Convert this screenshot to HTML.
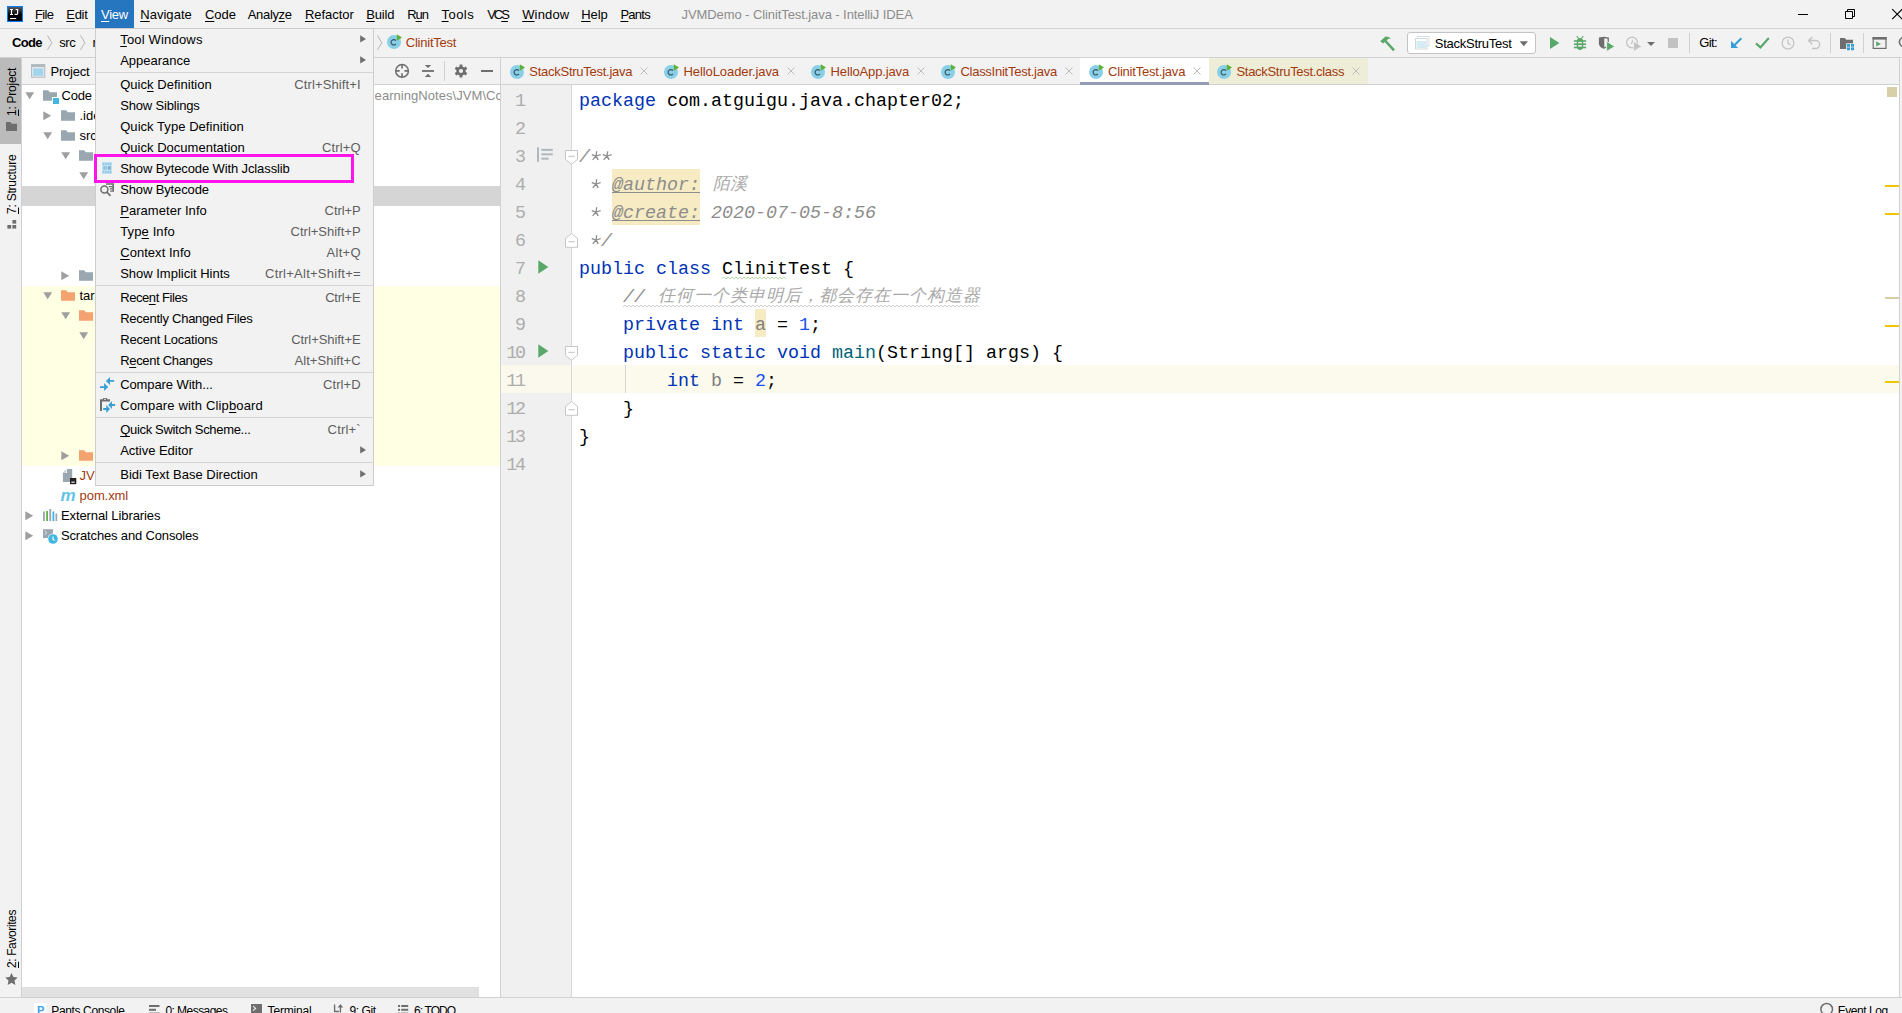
<!DOCTYPE html>
<html><head><meta charset="utf-8"><title>JVMDemo - ClinitTest.java - IntelliJ IDEA</title>
<style>
html,body{margin:0;padding:0;}
body{width:1902px;height:1013px;overflow:hidden;position:relative;background:#f2f2f2;font-family:"Liberation Sans",sans-serif;font-size:13px;color:#000;}
u{text-decoration:underline;text-underline-offset:2px;text-decoration-thickness:1px;}
svg{display:block;overflow:visible;}
</style></head><body>
<div style="position:absolute;left:0px;top:0px;width:1902px;height:1013px;background:#f2f2f2;"></div><div style="position:absolute;left:0px;top:28px;width:1902px;height:1px;background:#d1d1d1;"></div><div style="position:absolute;left:0px;top:57px;width:1902px;height:1px;background:#d1d1d1;"></div><div style="position:absolute;left:0px;top:58px;width:22px;height:939px;background:#f2f2f2;"></div><div style="position:absolute;left:21px;top:58px;width:1px;height:939px;background:#d1d1d1;"></div><div style="position:absolute;left:22px;top:58px;width:478px;height:27px;background:#f2f2f2;"></div><div style="position:absolute;left:22px;top:84px;width:478px;height:1px;background:#d1d1d1;"></div><div style="position:absolute;left:22px;top:85px;width:478px;height:912px;background:#fff;"></div><div style="position:absolute;left:500px;top:58px;width:1px;height:939px;background:#d1d1d1;"></div><div style="position:absolute;left:501px;top:58px;width:1398px;height:26px;background:#f2f2f2;"></div><div style="position:absolute;left:501px;top:84px;width:1398px;height:1px;background:#d1d1d1;"></div><div style="position:absolute;left:501px;top:85px;width:70px;height:912px;background:#f0f0f0;"></div><div style="position:absolute;left:571px;top:85px;width:1px;height:912px;background:#d9d9d9;"></div><div style="position:absolute;left:572px;top:85px;width:1327px;height:912px;background:#fff;"></div><div style="position:absolute;left:1899px;top:58px;width:1px;height:939px;background:#d1d1d1;"></div><div style="position:absolute;left:1900px;top:58px;width:2px;height:939px;background:#f2f2f2;"></div><div style="position:absolute;left:0px;top:997px;width:1902px;height:1px;background:#d1d1d1;"></div><div style="position:absolute;left:0px;top:998px;width:1902px;height:15px;background:#f2f2f2;"></div><svg style="position:absolute;left:7px;top:6px;" width="16" height="16" viewBox="0 0 16 16"><defs><linearGradient id="ijg" x1="0" y1="0" x2="0" y2="1"><stop offset="0" stop-color="#5a5a5a"/><stop offset="0.550" stop-color="#000"/></linearGradient></defs><rect x="0" y="0" width="16" height="16" fill="#087cfa"/><rect x="1.100" y="1.100" width="13.800" height="13.800" fill="url(#ijg)"/><path d="M3 3h3v1h-0.900v4h0.900v1h-3v-1h0.900v-4h-0.900z" fill="#fff"/><path d="M8.600 3h2.600v4.300c0 1.200-0.700 1.800-1.900 1.800c-0.900 0-1.600-0.300-2.100-0.900l0.800-0.800c0.300 0.400 0.700 0.600 1.200 0.600c0.500 0 0.800-0.300 0.800-0.900v-3.100h-1.400z" fill="#fff"/><rect x="3" y="12" width="6.200" height="1.100" fill="#fff"/></svg><div style="position:absolute;left:95px;top:0px;width:39px;height:28px;background:#2675bf;"></div><span style="position:absolute;left:35px;top:5px;font-family:'Liberation Sans', sans-serif;font-size:13px;line-height:19px;color:#000;white-space:pre;letter-spacing:-0.656px;"><u>F</u>ile</span><span style="position:absolute;left:66.3px;top:5px;font-family:'Liberation Sans', sans-serif;font-size:13px;line-height:19px;color:#000;white-space:pre;letter-spacing:-0.302px;"><u>E</u>dit</span><span style="position:absolute;left:101px;top:5px;font-family:'Liberation Sans', sans-serif;font-size:13px;line-height:19px;color:#fff;white-space:pre;letter-spacing:-0.251px;"><u>V</u>iew</span><span style="position:absolute;left:140.2px;top:5px;font-family:'Liberation Sans', sans-serif;font-size:13px;line-height:19px;color:#000;white-space:pre;letter-spacing:0.041px;"><u>N</u>avigate</span><span style="position:absolute;left:205px;top:5px;font-family:'Liberation Sans', sans-serif;font-size:13px;line-height:19px;color:#000;white-space:pre;letter-spacing:-0.031px;"><u>C</u>ode</span><span style="position:absolute;left:247.8px;top:5px;font-family:'Liberation Sans', sans-serif;font-size:13px;line-height:19px;color:#000;white-space:pre;letter-spacing:-0.344px;">Analy<u>z</u>e</span><span style="position:absolute;left:305px;top:5px;font-family:'Liberation Sans', sans-serif;font-size:13px;line-height:19px;color:#000;white-space:pre;letter-spacing:-0.049px;"><u>R</u>efactor</span><span style="position:absolute;left:366.2px;top:5px;font-family:'Liberation Sans', sans-serif;font-size:13px;line-height:19px;color:#000;white-space:pre;letter-spacing:-0.155px;"><u>B</u>uild</span><span style="position:absolute;left:407.3px;top:5px;font-family:'Liberation Sans', sans-serif;font-size:13px;line-height:19px;color:#000;white-space:pre;letter-spacing:-1.080px;">R<u>u</u>n</span><span style="position:absolute;left:441.6px;top:5px;font-family:'Liberation Sans', sans-serif;font-size:13px;line-height:19px;color:#000;white-space:pre;letter-spacing:0.435px;"><u>T</u>ools</span><span style="position:absolute;left:487.2px;top:5px;font-family:'Liberation Sans', sans-serif;font-size:13px;line-height:19px;color:#000;white-space:pre;letter-spacing:-2.017px;">VC<u>S</u></span><span style="position:absolute;left:522.2px;top:5px;font-family:'Liberation Sans', sans-serif;font-size:13px;line-height:19px;color:#000;white-space:pre;letter-spacing:0.150px;"><u>W</u>indow</span><span style="position:absolute;left:581.2px;top:5px;font-family:'Liberation Sans', sans-serif;font-size:13px;line-height:19px;color:#000;white-space:pre;letter-spacing:-0.050px;"><u>H</u>elp</span><span style="position:absolute;left:620.4px;top:5px;font-family:'Liberation Sans', sans-serif;font-size:13px;line-height:19px;color:#000;white-space:pre;letter-spacing:-0.737px;"><u>P</u>ants</span><span style="position:absolute;left:681.5px;top:5px;font-family:'Liberation Sans', sans-serif;font-size:13px;line-height:19px;color:#8c8c8c;white-space:pre;letter-spacing:-0.085px;">JVMDemo - ClinitTest.java - IntelliJ IDEA</span><div style="position:absolute;left:1798px;top:14px;width:10px;height:1px;background:#000;"></div><svg style="position:absolute;left:1845px;top:9px;" width="10" height="10" viewBox="0 0 10 10"><path d="M0.500 2.500h7v7h-7z M2.500 2.500v-2h7v7h-2" fill="none" stroke="#000" stroke-width="1"/></svg><svg style="position:absolute;left:1892px;top:9px;" width="10" height="10" viewBox="0 0 10 10"><path d="M0.200 0.200l10 10M10.200 0.200l-10 10" fill="none" stroke="#000" stroke-width="1.100"/></svg><span style="position:absolute;left:12px;top:33px;font-family:'Liberation Sans', sans-serif;font-size:13px;line-height:19px;color:#000;white-space:pre;font-weight:bold;letter-spacing:-0.700px;">Code</span><svg style="position:absolute;left:47px;top:35px;" width="6" height="16" viewBox="0 0 6 16"><path d="M0.500 0.500l4.300 7.200l-4.300 7.200" fill="none" stroke="#b4b4b4" stroke-width="1"/></svg><span style="position:absolute;left:59.3px;top:33px;font-family:'Liberation Sans', sans-serif;font-size:13px;line-height:19px;color:#000;white-space:pre;letter-spacing:-0.472px;">src</span><svg style="position:absolute;left:80px;top:35px;" width="6" height="16" viewBox="0 0 6 16"><path d="M0.500 0.500l4.300 7.200l-4.300 7.200" fill="none" stroke="#b4b4b4" stroke-width="1"/></svg><span style="position:absolute;left:92.4px;top:33px;font-family:'Liberation Sans', sans-serif;font-size:13px;line-height:19px;color:#000;white-space:pre;">r</span><svg style="position:absolute;left:377px;top:35px;" width="6" height="16" viewBox="0 0 6 16"><path d="M0.500 0.500l4.300 7.200l-4.300 7.200" fill="none" stroke="#b4b4b4" stroke-width="1"/></svg><svg style="position:absolute;left:386px;top:34.4px;" width="16" height="16" viewBox="0 0 16 16"><circle cx="8" cy="8" r="7" fill="#88cfe8"/><path d="M9.9 6.6a2.7 2.7 0 1 0 0 3.4" fill="none" stroke="#3c5866" stroke-width="1.2"/><path d="M10.8 0.2v6.6l5.2-3.3z" fill="#5db233"/></svg><span style="position:absolute;left:405.8px;top:33px;font-family:'Liberation Sans', sans-serif;font-size:13px;line-height:19px;color:#a23a0e;white-space:pre;letter-spacing:-0.239px;">ClinitTest</span><svg style="position:absolute;left:1379px;top:35px;" width="18" height="16" viewBox="0 0 18 16"><path d="M1.2 6.2l5.2-4.6l3.6 0.4l1.8 2l-2.2 -0.4l-2 1.8l8.4 9.2l-1.9 1.7l-8.4-9.2l-1.6 1.4z" fill="#59a869"/></svg><div style="position:absolute;left:1407px;top:32px;width:127px;height:20px;background:#fff;border:1px solid #c4c4c4;border-radius:3px;"></div><svg style="position:absolute;left:1415px;top:36px;" width="15" height="14" viewBox="0 0 15 14"><rect x="2.5" y="0.5" width="11.5" height="9.5" fill="#fff" stroke="#d9dde0" stroke-width="1"/><rect x="0.5" y="2.5" width="11.5" height="10.5" fill="#fff" stroke="#d3d8db" stroke-width="1"/><rect x="1.5" y="5" width="9.5" height="7" fill="#d5ebf5"/></svg><span style="position:absolute;left:1434.8px;top:34px;font-family:'Liberation Sans', sans-serif;font-size:13px;line-height:19px;color:#000;white-space:pre;letter-spacing:-0.267px;">StackStruTest</span><svg style="position:absolute;left:1519px;top:41px;" width="10" height="6" viewBox="0 0 10 6"><path d="M0.6 0.3h8.4l-4.2 4.9z" fill="#6e6e6e"/></svg><svg style="position:absolute;left:1549px;top:36px;" width="12" height="14" viewBox="0 0 12 14"><path d="M1 1l9.4 6l-9.4 6z" fill="#59a869"/></svg><svg style="position:absolute;left:1565px;top:30px;" width="100" height="26" viewBox="0 0 100 26"><g fill="#59a869"><path d="M11.8 11.2c0-1.8 1.4-3.1 3.2-3.1s3.2 1.3 3.2 3.1v5.4c0 2-1.4 3.5-3.2 3.5s-3.2-1.5-3.2-3.5z"/><rect x="8.9" y="10.2" width="12.2" height="1.6"/><rect x="8.9" y="13.4" width="12.2" height="1.6"/><rect x="8.9" y="16.7" width="12.2" height="1.6"/><path d="M12.2 5.8l2 2.6l-0.9 0.7l-2-2.6zM17.8 5.8l-2 2.6l0.9 0.7l2-2.6z"/></g><g fill="#f2f2f2"><rect x="13.1" y="11.9" width="3.8" height="1.4"/><rect x="13.1" y="15.1" width="3.8" height="1.5"/></g><path d="M33.9 7.6l5-0.8l5 0.8v5.8c0 2.6-2 4.4-5 5.4c-3-1-5-2.800-5-5.400z" fill="#6e6e6e"/><path d="M39.300 8.300l3.300 0.500v4.800c0 1.700-1.200 3-3.300 3.900z" fill="#f2f2f2"/><path d="M41.600 11.300l8.200 5.100l-8.200 5.100z" fill="#59a869" stroke="#f2f2f2" stroke-width="0.9"/><circle cx="67" cy="12.500" r="5.400" fill="none" stroke="#c3c3c3" stroke-width="1.300"/><path d="M67.300 9.600v2.600l-1.300 1.700" fill="none" stroke="#c3c3c3" stroke-width="1.100"/><path d="M68.600 11.300l8.200 5.100l-8.200 5.100z" fill="#c3c3c3" stroke="#f2f2f2" stroke-width="0.9"/><path d="M82 12h8l-4 4z" fill="#6e6e6e"/></svg><div style="position:absolute;left:1668px;top:38px;width:10px;height:10px;background:#c2c2c2;"></div><div style="position:absolute;left:1689px;top:33px;width:1px;height:20px;background:#d1d1d1;"></div><span style="position:absolute;left:1699.3px;top:33px;font-family:'Liberation Sans', sans-serif;font-size:13px;line-height:19px;color:#000;white-space:pre;letter-spacing:-0.611px;">Git:</span><svg style="position:absolute;left:1730px;top:37px;" width="13" height="12" viewBox="0 0 13 12"><path d="M11.4 1.200l-7.600 7.600" fill="none" stroke="#389fd6" stroke-width="2"/><path d="M1 3.800v7.200h7.200z" fill="#389fd6"/></svg><svg style="position:absolute;left:1755px;top:37px;" width="15" height="12" viewBox="0 0 15 12"><path d="M1 6.4l4.4 4l8.4-9.4" fill="none" stroke="#59a869" stroke-width="2.1"/></svg><svg style="position:absolute;left:1781px;top:36px;" width="14" height="14" viewBox="0 0 14 14"><circle cx="7" cy="7" r="5.9" fill="none" stroke="#c4c4c4" stroke-width="1.3"/><path d="M7 3.4v4l2.6 1.6" fill="none" stroke="#c4c4c4" stroke-width="1.3"/></svg><svg style="position:absolute;left:1807px;top:36px;" width="15" height="14" viewBox="0 0 15 14"><path d="M5.2 1l-3.6 3.6l3.6 3.6M1.8 4.6h6.8a4 4 0 0 1 0 8h-3.6" fill="none" stroke="#c4c4c4" stroke-width="1.5"/></svg><div style="position:absolute;left:1830px;top:33px;width:1px;height:20px;background:#d1d1d1;"></div><svg style="position:absolute;left:1839px;top:37px;" width="16" height="14" viewBox="0 0 16 14"><path d="M1 1h4.800l1.500 1.800h6.700v3.400h-6.800v5.800h-6.200z" fill="#6e6e6e"/><g fill="#389fd6"><rect x="8" y="7" width="3" height="2.800"/><rect x="12" y="7" width="3" height="2.800"/><rect x="8" y="10.400" width="3" height="2.800"/><rect x="12" y="10.400" width="3" height="2.800"/></g></svg><div style="position:absolute;left:1863px;top:33px;width:1px;height:20px;background:#d1d1d1;"></div><svg style="position:absolute;left:1872px;top:37px;" width="16" height="13" viewBox="0 0 16 13"><rect x="1.200" y="0.600" width="12.800" height="10.800" fill="none" stroke="#6e6e6e" stroke-width="1.200"/><rect x="0.600" y="0" width="14" height="2.600" fill="#6e6e6e"/><path d="M4.200 4.200l4.800 2.700l-4.800 2.700z" fill="#59a869"/></svg><svg style="position:absolute;left:1898px;top:36px;" width="8" height="14" viewBox="0 0 8 14"><circle cx="6" cy="6" r="4.6" fill="none" stroke="#6e6e6e" stroke-width="1.6"/></svg><div style="position:absolute;left:0px;top:58px;width:21px;height:86px;background:#bbbbbb;"></div><span style="position:absolute;left:16px;top:103px;font-family:'Liberation Sans', sans-serif;font-size:12px;line-height:18px;color:#000;white-space:pre;letter-spacing:-0.256px;transform-origin:0 13px;transform:rotate(-90deg);"><u>1</u>: Project</span><svg style="position:absolute;left:6px;top:122px;" width="11" height="9" viewBox="0 0 11 9"><path d="M0 0h4.4l1.4 1.7h5.2v7.3h-11z" fill="#6e6e6e"/></svg><span style="position:absolute;left:16px;top:201px;font-family:'Liberation Sans', sans-serif;font-size:12px;line-height:18px;color:#000;white-space:pre;letter-spacing:-0.222px;transform-origin:0 13px;transform:rotate(-90deg);"><u>7</u>: Structure</span><svg style="position:absolute;left:7px;top:220px;" width="10" height="9" viewBox="0 0 10 9"><g fill="#6e6e6e"><rect x="5.4" y="0" width="3.8" height="3.6"/><rect x="0.4" y="5" width="3.8" height="3.6"/><rect x="5.4" y="5" width="3.8" height="3.6"/></g></svg><span style="position:absolute;left:16px;top:955px;font-family:'Liberation Sans', sans-serif;font-size:12px;line-height:18px;color:#000;white-space:pre;letter-spacing:-0.391px;transform-origin:0 13px;transform:rotate(-90deg);"><u>2</u>: Favorites</span><svg style="position:absolute;left:5px;top:973px;" width="13" height="12" viewBox="0 0 13 12"><path d="M6.5 0l1.9 4.1l4.3 0.5l-3.2 3l0.9 4.4l-3.9-2.3l-3.9 2.3l0.9-4.4l-3.2-3l4.3-0.5z" fill="#6e6e6e"/></svg><svg style="position:absolute;left:31px;top:64px;" width="15" height="14" viewBox="0 0 15 14"><rect x="0.6" y="0.6" width="13.2" height="12.6" fill="#e8e8e8" stroke="#aeb9c0" stroke-width="1"/><rect x="0.6" y="0.6" width="13.2" height="2.4" fill="#aeb9c0"/><rect x="2.2" y="4.4" width="10" height="7.4" fill="#9fd6ee"/></svg><span style="position:absolute;left:50.6px;top:62px;font-family:'Liberation Sans', sans-serif;font-size:13px;line-height:19px;color:#000;white-space:pre;letter-spacing:-0.245px;">Project</span><svg style="position:absolute;left:394px;top:63px;" width="16" height="16" viewBox="0 0 16 16"><circle cx="8.05" cy="7.9" r="6.35" fill="none" stroke="#6e6e6e" stroke-width="1.500"/><path d="M8.05 1.500v4M8.05 10.300v4M1.650 7.900h4M10.450 7.900h4" stroke="#6e6e6e" stroke-width="1.600"/></svg><svg style="position:absolute;left:421px;top:64px;" width="14" height="14" viewBox="0 0 14 14"><rect x="1" y="6.100" width="12" height="1.800" fill="#6e6e6e"/><path d="M3.800 1.100h6.400l-3.200 3zM3.800 12.900h6.400l-3.200-3.100z" fill="#6e6e6e"/></svg><div style="position:absolute;left:444px;top:61px;width:1px;height:20px;background:#d1d1d1;"></div><svg style="position:absolute;left:454px;top:64px;" width="14" height="14" viewBox="0 0 14 14"><path d="M5.49 2.55L5.63 0.54L8.37 0.54L8.51 2.55L10.10 3.47L11.90 2.58L13.28 4.96L11.61 6.08L11.61 7.92L13.28 9.04L11.90 11.42L10.10 10.53L8.51 11.45L8.37 13.46L5.63 13.46L5.49 11.45L3.90 10.53L2.10 11.42L0.72 9.04L2.39 7.92L2.39 6.08L0.72 4.96L2.10 2.58L3.90 3.47z" fill="#6e6e6e"/><circle cx="7" cy="7" r="2.100" fill="#f2f2f2"/></svg><div style="position:absolute;left:481px;top:70px;width:12px;height:2px;background:#6e6e6e;"></div><div style="position:absolute;left:22px;top:286px;width:478px;height:180px;background:#ffffe4;"></div><div style="position:absolute;left:22px;top:186px;width:478px;height:20px;background:#d5d5d5;"></div><svg style="position:absolute;left:25px;top:92px;" width="10" height="8" viewBox="0 0 10 8"><path d="M0.3 0.3h8.8l-4.4 6.9z" fill="#9f9f9f"/></svg><svg style="position:absolute;left:43px;top:90px;" width="14" height="11" viewBox="0 0 14 11"><path d="M0 0.2h5.2l1.5 2h7.3v8.6h-14z" fill="#9aa7b0"/></svg><div style="position:absolute;left:52px;top:97px;width:6px;height:6px;background:#fff;"></div><div style="position:absolute;left:53px;top:98px;width:6px;height:6px;background:#40b6e0;"></div><span style="position:absolute;left:61.5px;top:86px;font-family:'Liberation Sans', sans-serif;font-size:13px;line-height:19px;color:#000;white-space:pre;letter-spacing:-0.226px;">Code</span><svg style="position:absolute;left:43px;top:111px;" width="8" height="10" viewBox="0 0 8 10"><path d="M0.300 0.200v9l7.900-4.500z" fill="#9f9f9f"/></svg><svg style="position:absolute;left:61px;top:110px;" width="14" height="11" viewBox="0 0 14 11"><path d="M0 0.2h5.2l1.5 2h7.3v8.6h-14z" fill="#9aa7b0"/></svg><span style="position:absolute;left:79.5px;top:106px;font-family:'Liberation Sans', sans-serif;font-size:13px;line-height:19px;color:#000;white-space:pre;">.ide</span><svg style="position:absolute;left:43px;top:132px;" width="10" height="8" viewBox="0 0 10 8"><path d="M0.3 0.3h8.8l-4.4 6.9z" fill="#9f9f9f"/></svg><svg style="position:absolute;left:61px;top:130px;" width="14" height="11" viewBox="0 0 14 11"><path d="M0 0.2h5.2l1.5 2h7.3v8.6h-14z" fill="#9aa7b0"/></svg><span style="position:absolute;left:79.5px;top:126px;font-family:'Liberation Sans', sans-serif;font-size:13px;line-height:19px;color:#000;white-space:pre;">src</span><svg style="position:absolute;left:61px;top:152px;" width="10" height="8" viewBox="0 0 10 8"><path d="M0.3 0.3h8.8l-4.4 6.9z" fill="#9f9f9f"/></svg><svg style="position:absolute;left:79px;top:150px;" width="14" height="11" viewBox="0 0 14 11"><path d="M0 0.2h5.2l1.5 2h7.3v8.6h-14z" fill="#9aa7b0"/></svg><svg style="position:absolute;left:79px;top:172px;" width="10" height="8" viewBox="0 0 10 8"><path d="M0.3 0.3h8.8l-4.4 6.9z" fill="#9f9f9f"/></svg><svg style="position:absolute;left:61px;top:271px;" width="8" height="10" viewBox="0 0 8 10"><path d="M0.300 0.200v9l7.900-4.500z" fill="#9f9f9f"/></svg><svg style="position:absolute;left:79px;top:270px;" width="14" height="11" viewBox="0 0 14 11"><path d="M0 0.2h5.2l1.5 2h7.3v8.6h-14z" fill="#9aa7b0"/></svg><svg style="position:absolute;left:43px;top:292px;" width="10" height="8" viewBox="0 0 10 8"><path d="M0.3 0.3h8.8l-4.4 6.9z" fill="#9f9f9f"/></svg><svg style="position:absolute;left:61px;top:290px;" width="14" height="11" viewBox="0 0 14 11"><path d="M0 0.2h5.2l1.5 2h7.3v8.6h-14z" fill="#f4a26f"/></svg><span style="position:absolute;left:79.5px;top:286px;font-family:'Liberation Sans', sans-serif;font-size:13px;line-height:19px;color:#000;white-space:pre;">tar</span><svg style="position:absolute;left:61px;top:312px;" width="10" height="8" viewBox="0 0 10 8"><path d="M0.3 0.3h8.8l-4.4 6.9z" fill="#9f9f9f"/></svg><svg style="position:absolute;left:79px;top:310px;" width="14" height="11" viewBox="0 0 14 11"><path d="M0 0.2h5.2l1.5 2h7.3v8.6h-14z" fill="#f4a26f"/></svg><svg style="position:absolute;left:79px;top:332px;" width="10" height="8" viewBox="0 0 10 8"><path d="M0.3 0.3h8.8l-4.4 6.9z" fill="#9f9f9f"/></svg><svg style="position:absolute;left:61px;top:451px;" width="8" height="10" viewBox="0 0 8 10"><path d="M0.300 0.200v9l7.900-4.500z" fill="#9f9f9f"/></svg><svg style="position:absolute;left:79px;top:450px;" width="14" height="11" viewBox="0 0 14 11"><path d="M0 0.2h5.2l1.5 2h7.3v8.6h-14z" fill="#f4a26f"/></svg><svg style="position:absolute;left:62px;top:468px;" width="16" height="16" viewBox="0 0 16 16"><path d="M5 1h5.200v13h-9.300v-8.900h4.100z" fill="#9aa7b0"/><path d="M4.200 1.200v3.600h-3.400z" fill="#c3cbd1"/><rect x="8" y="10" width="6.300" height="6.200" fill="#231f20"/><rect x="9.300" y="13.600" width="3.400" height="1.100" fill="#fff"/></svg><span style="position:absolute;left:79.4px;top:466px;font-family:'Liberation Sans', sans-serif;font-size:13px;line-height:19px;color:#a23a0e;white-space:pre;">JVM</span><span style="position:absolute;left:60.5px;top:484px;font-family:'Liberation Sans', sans-serif;font-size:17px;line-height:23px;color:#62c4ea;white-space:pre;font-weight:bold;font-style:italic;">m</span><span style="position:absolute;left:79.6px;top:486px;font-family:'Liberation Sans', sans-serif;font-size:13px;line-height:19px;color:#a23a0e;white-space:pre;letter-spacing:-0.087px;">pom.xml</span><svg style="position:absolute;left:25px;top:511px;" width="8" height="10" viewBox="0 0 8 10"><path d="M0.300 0.200v9l7.900-4.500z" fill="#9f9f9f"/></svg><svg style="position:absolute;left:42px;top:509px;" width="16" height="14" viewBox="0 0 16 14"><g><rect x="1" y="2.5" width="1.8" height="9.5" fill="#9aa7b0"/><rect x="4.2" y="2" width="1.8" height="10" fill="#62b543"/><rect x="7.3" y="0" width="1.9" height="12" fill="#9aa7b0"/><rect x="10.5" y="2.5" width="1.8" height="9.5" fill="#40b6e0"/><rect x="13.5" y="4.5" width="1.7" height="7.5" fill="#9aa7b0"/></g></svg><span style="position:absolute;left:61px;top:506px;font-family:'Liberation Sans', sans-serif;font-size:13px;line-height:19px;color:#000;white-space:pre;letter-spacing:-0.103px;">External Libraries</span><svg style="position:absolute;left:25px;top:531px;" width="8" height="10" viewBox="0 0 8 10"><path d="M0.300 0.200v9l7.900-4.500z" fill="#9f9f9f"/></svg><svg style="position:absolute;left:42px;top:528px;" width="17" height="17" viewBox="0 0 17 17"><path d="M1 1.200h10v8.800h-10z" fill="#9aa7b0"/><path d="M2.600 3l2.200 1.800l-2.200 1.800" fill="none" stroke="#dfe4e8" stroke-width="1"/><circle cx="11" cy="11" r="5.400" fill="#fff"/><circle cx="11" cy="11" r="4.800" fill="#40b6e0"/><path d="M11 8.400v2.900l1.700 1.300" fill="none" stroke="#fff" stroke-width="1.100"/></svg><span style="position:absolute;left:61px;top:526px;font-family:'Liberation Sans', sans-serif;font-size:13px;line-height:19px;color:#000;white-space:pre;letter-spacing:-0.158px;">Scratches and Consoles</span><span style="position:absolute;left:374.6px;top:86px;font-family:'Liberation Sans', sans-serif;font-size:13px;line-height:19px;color:#8c8c8c;white-space:pre;letter-spacing:0.056px;width:125px;overflow:hidden;">earningNotes\JVM\Cc</span><div style="position:absolute;left:22px;top:987px;width:457px;height:10px;background:#e1e1e1;"></div><div style="position:absolute;left:1080px;top:58px;width:129px;height:27px;background:#fff;"></div><div style="position:absolute;left:1080px;top:82px;width:129px;height:3px;background:#939eb5;"></div><div style="position:absolute;left:1209px;top:58px;width:159px;height:26px;background:#eeedd7;"></div><svg style="position:absolute;left:509.4px;top:64px;" width="16" height="16" viewBox="0 0 16 16"><circle cx="8" cy="8" r="7" fill="#88cfe8"/><path d="M9.9 6.6a2.7 2.7 0 1 0 0 3.4" fill="none" stroke="#3c5866" stroke-width="1.2"/><path d="M10.8 0.2v6.6l5.2-3.3z" fill="#5db233"/></svg><span style="position:absolute;left:529.3px;top:62px;font-family:'Liberation Sans', sans-serif;font-size:13px;line-height:19px;color:#a23a0e;white-space:pre;letter-spacing:-0.262px;">StackStruTest.java</span><svg style="position:absolute;left:640px;top:67.4px;" width="8" height="8" viewBox="0 0 8 8"><path d="M0.5 0.5l7 7M7.5 0.5l-7 7" fill="none" stroke="#bdbdbd" stroke-width="1"/></svg><svg style="position:absolute;left:663.2px;top:64px;" width="16" height="16" viewBox="0 0 16 16"><circle cx="8" cy="8" r="7" fill="#88cfe8"/><path d="M9.9 6.6a2.7 2.7 0 1 0 0 3.4" fill="none" stroke="#3c5866" stroke-width="1.2"/><path d="M10.8 0.2v6.6l5.2-3.3z" fill="#5db233"/></svg><span style="position:absolute;left:683.5px;top:62px;font-family:'Liberation Sans', sans-serif;font-size:13px;line-height:19px;color:#a23a0e;white-space:pre;letter-spacing:-0.084px;">HelloLoader.java</span><svg style="position:absolute;left:786.8px;top:67.4px;" width="8" height="8" viewBox="0 0 8 8"><path d="M0.5 0.5l7 7M7.5 0.5l-7 7" fill="none" stroke="#bdbdbd" stroke-width="1"/></svg><svg style="position:absolute;left:810.1px;top:64px;" width="16" height="16" viewBox="0 0 16 16"><circle cx="8" cy="8" r="7" fill="#88cfe8"/><path d="M9.9 6.6a2.7 2.7 0 1 0 0 3.4" fill="none" stroke="#3c5866" stroke-width="1.2"/><path d="M10.8 0.2v6.6l5.2-3.3z" fill="#5db233"/></svg><span style="position:absolute;left:830.6px;top:62px;font-family:'Liberation Sans', sans-serif;font-size:13px;line-height:19px;color:#a23a0e;white-space:pre;letter-spacing:-0.135px;">HelloApp.java</span><svg style="position:absolute;left:917.2px;top:67.4px;" width="8" height="8" viewBox="0 0 8 8"><path d="M0.5 0.5l7 7M7.5 0.5l-7 7" fill="none" stroke="#bdbdbd" stroke-width="1"/></svg><svg style="position:absolute;left:940.1px;top:64px;" width="16" height="16" viewBox="0 0 16 16"><circle cx="8" cy="8" r="7" fill="#88cfe8"/><path d="M9.9 6.6a2.7 2.7 0 1 0 0 3.4" fill="none" stroke="#3c5866" stroke-width="1.2"/><path d="M10.8 0.2v6.6l5.2-3.3z" fill="#5db233"/></svg><span style="position:absolute;left:960.4px;top:62px;font-family:'Liberation Sans', sans-serif;font-size:13px;line-height:19px;color:#a23a0e;white-space:pre;letter-spacing:-0.256px;">ClassInitTest.java</span><svg style="position:absolute;left:1065px;top:67.4px;" width="8" height="8" viewBox="0 0 8 8"><path d="M0.5 0.5l7 7M7.5 0.5l-7 7" fill="none" stroke="#bdbdbd" stroke-width="1"/></svg><svg style="position:absolute;left:1088px;top:64px;" width="16" height="16" viewBox="0 0 16 16"><circle cx="8" cy="8" r="7" fill="#88cfe8"/><path d="M9.9 6.6a2.7 2.7 0 1 0 0 3.4" fill="none" stroke="#3c5866" stroke-width="1.2"/><path d="M10.8 0.2v6.6l5.2-3.3z" fill="#5db233"/></svg><span style="position:absolute;left:1108px;top:62px;font-family:'Liberation Sans', sans-serif;font-size:13px;line-height:19px;color:#a23a0e;white-space:pre;letter-spacing:-0.200px;">ClinitTest.java</span><svg style="position:absolute;left:1193.4px;top:67.4px;" width="8" height="8" viewBox="0 0 8 8"><path d="M0.5 0.5l7 7M7.5 0.5l-7 7" fill="none" stroke="#bdbdbd" stroke-width="1"/></svg><svg style="position:absolute;left:1216.4px;top:64px;" width="16" height="16" viewBox="0 0 16 16"><circle cx="8" cy="8" r="7" fill="#88cfe8"/><path d="M9.9 6.6a2.7 2.7 0 1 0 0 3.4" fill="none" stroke="#3c5866" stroke-width="1.2"/><path d="M10.8 0.2v6.6l5.2-3.3z" fill="#5db233"/></svg><span style="position:absolute;left:1236.5px;top:62px;font-family:'Liberation Sans', sans-serif;font-size:13px;line-height:19px;color:#a23a0e;white-space:pre;letter-spacing:-0.302px;">StackStruTest.class</span><svg style="position:absolute;left:1352.3px;top:67.4px;" width="8" height="8" viewBox="0 0 8 8"><path d="M0.5 0.5l7 7M7.5 0.5l-7 7" fill="none" stroke="#bdbdbd" stroke-width="1"/></svg><div style="position:absolute;left:1887px;top:87px;width:10px;height:10px;background:#d8cfa9;"></div><div style="position:absolute;left:572px;top:365px;width:1327px;height:28px;background:#fcfaed;"></div><div style="position:absolute;left:501px;top:365px;width:70px;height:28px;background:#fbf9ee;"></div><span style="position:absolute;left:515px;top:90px;font-family:'Liberation Mono', monospace;font-size:18.33px;line-height:24px;color:#adadad;white-space:pre;">1</span><span style="position:absolute;left:515px;top:118px;font-family:'Liberation Mono', monospace;font-size:18.33px;line-height:24px;color:#adadad;white-space:pre;">2</span><span style="position:absolute;left:515px;top:146px;font-family:'Liberation Mono', monospace;font-size:18.33px;line-height:24px;color:#adadad;white-space:pre;">3</span><span style="position:absolute;left:515px;top:174px;font-family:'Liberation Mono', monospace;font-size:18.33px;line-height:24px;color:#adadad;white-space:pre;">4</span><span style="position:absolute;left:515px;top:202px;font-family:'Liberation Mono', monospace;font-size:18.33px;line-height:24px;color:#adadad;white-space:pre;">5</span><span style="position:absolute;left:515px;top:230px;font-family:'Liberation Mono', monospace;font-size:18.33px;line-height:24px;color:#adadad;white-space:pre;">6</span><span style="position:absolute;left:515px;top:258px;font-family:'Liberation Mono', monospace;font-size:18.33px;line-height:24px;color:#adadad;white-space:pre;">7</span><span style="position:absolute;left:515px;top:286px;font-family:'Liberation Mono', monospace;font-size:18.33px;line-height:24px;color:#adadad;white-space:pre;">8</span><span style="position:absolute;left:515px;top:314px;font-family:'Liberation Mono', monospace;font-size:18.33px;line-height:24px;color:#adadad;white-space:pre;">9</span><span style="position:absolute;left:506.2px;top:342px;font-family:'Liberation Mono', monospace;font-size:18.33px;line-height:24px;color:#adadad;white-space:pre;letter-spacing:-2.200px;">10</span><span style="position:absolute;left:506.2px;top:370px;font-family:'Liberation Mono', monospace;font-size:18.33px;line-height:24px;color:#adadad;white-space:pre;letter-spacing:-2.200px;">11</span><span style="position:absolute;left:506.2px;top:398px;font-family:'Liberation Mono', monospace;font-size:18.33px;line-height:24px;color:#adadad;white-space:pre;letter-spacing:-2.200px;">12</span><span style="position:absolute;left:506.2px;top:426px;font-family:'Liberation Mono', monospace;font-size:18.33px;line-height:24px;color:#adadad;white-space:pre;letter-spacing:-2.200px;">13</span><span style="position:absolute;left:506.2px;top:454px;font-family:'Liberation Mono', monospace;font-size:18.33px;line-height:24px;color:#adadad;white-space:pre;letter-spacing:-2.200px;">14</span><div style="position:absolute;left:612px;top:169px;width:88px;height:56px;background:#f6ebc2;"></div><div style="position:absolute;left:755px;top:309px;width:11px;height:28px;background:#f6ebc2;"></div><span style="position:absolute;left:579.0px;top:90px;font-family:'Liberation Mono', monospace;font-size:18.33px;line-height:24px;color:#0033b3;white-space:pre;">package</span><span style="position:absolute;left:667.0px;top:90px;font-family:'Liberation Mono', monospace;font-size:18.33px;line-height:24px;color:#000;white-space:pre;">com.atguigu.java.chapter02;</span><span style="position:absolute;left:579.0px;top:146px;font-family:'Liberation Mono', monospace;font-size:18.33px;line-height:24px;color:#8c8c8c;white-space:pre;font-style:italic;">/</span><svg style="position:absolute;left:589.7px;top:150px;" width="12" height="12" viewBox="0 0 12 12"><g transform="translate(6,6) skewX(-9)"><path d="M0 0L0.00 -4.70M0 0L4.47 -1.45M0 0L2.76 3.80M0 0L-2.76 3.80M0 0L-4.47 -1.45" fill="none" stroke="#8c8c8c" stroke-width="1.300"/></g></svg><svg style="position:absolute;left:600.7px;top:150px;" width="12" height="12" viewBox="0 0 12 12"><g transform="translate(6,6) skewX(-9)"><path d="M0 0L0.00 -4.70M0 0L4.47 -1.45M0 0L2.76 3.80M0 0L-2.76 3.80M0 0L-4.47 -1.45" fill="none" stroke="#8c8c8c" stroke-width="1.300"/></g></svg><svg style="position:absolute;left:589.7px;top:178px;" width="12" height="12" viewBox="0 0 12 12"><g transform="translate(6,6) skewX(-9)"><path d="M0 0L0.00 -4.70M0 0L4.47 -1.45M0 0L2.76 3.80M0 0L-2.76 3.80M0 0L-4.47 -1.45" fill="none" stroke="#8c8c8c" stroke-width="1.300"/></g></svg><span style="position:absolute;left:612.0px;top:174px;font-family:'Liberation Mono', monospace;font-size:18.33px;line-height:24px;color:#8c8c8c;white-space:pre;font-style:italic;text-decoration:underline;text-underline-offset:2px;text-decoration-thickness:1px;text-decoration-skip-ink:none;">@author:</span><span style="position:absolute;left:713px;top:172px;font-family:'Liberation Sans', sans-serif;font-size:17px;line-height:23px;color:#a8a8a8;white-space:pre;font-style:italic;">陌溪</span><svg style="position:absolute;left:589.7px;top:206px;" width="12" height="12" viewBox="0 0 12 12"><g transform="translate(6,6) skewX(-9)"><path d="M0 0L0.00 -4.70M0 0L4.47 -1.45M0 0L2.76 3.80M0 0L-2.76 3.80M0 0L-4.47 -1.45" fill="none" stroke="#8c8c8c" stroke-width="1.300"/></g></svg><span style="position:absolute;left:612.0px;top:202px;font-family:'Liberation Mono', monospace;font-size:18.33px;line-height:24px;color:#8c8c8c;white-space:pre;font-style:italic;text-decoration:underline;text-underline-offset:2px;text-decoration-thickness:1px;text-decoration-skip-ink:none;">@create:</span><span style="position:absolute;left:711.0px;top:202px;font-family:'Liberation Mono', monospace;font-size:18.33px;line-height:24px;color:#8c8c8c;white-space:pre;font-style:italic;">2020-07-05-8:56</span><svg style="position:absolute;left:589.7px;top:234px;" width="12" height="12" viewBox="0 0 12 12"><g transform="translate(6,6) skewX(-9)"><path d="M0 0L0.00 -4.70M0 0L4.47 -1.45M0 0L2.76 3.80M0 0L-2.76 3.80M0 0L-4.47 -1.45" fill="none" stroke="#8c8c8c" stroke-width="1.300"/></g></svg><span style="position:absolute;left:601.0px;top:230px;font-family:'Liberation Mono', monospace;font-size:18.33px;line-height:24px;color:#8c8c8c;white-space:pre;font-style:italic;">/</span><span style="position:absolute;left:579.0px;top:258px;font-family:'Liberation Mono', monospace;font-size:18.33px;line-height:24px;color:#0033b3;white-space:pre;">public</span><span style="position:absolute;left:656.0px;top:258px;font-family:'Liberation Mono', monospace;font-size:18.33px;line-height:24px;color:#0033b3;white-space:pre;">class</span><span style="position:absolute;left:722.0px;top:258px;font-family:'Liberation Mono', monospace;font-size:18.33px;line-height:24px;color:#000;white-space:pre;">ClinitTest {</span><span style="position:absolute;left:623.0px;top:286px;font-family:'Liberation Mono', monospace;font-size:18.33px;line-height:24px;color:#8c8c8c;white-space:pre;font-style:italic;">//</span><span style="position:absolute;left:658px;top:284px;font-family:'Liberation Sans', sans-serif;font-size:17px;line-height:23px;color:#a8a8a8;white-space:pre;font-style:italic;letter-spacing:0.941px;">任何一个类申明后，都会存在一个构造器</span><span style="position:absolute;left:623.0px;top:314px;font-family:'Liberation Mono', monospace;font-size:18.33px;line-height:24px;color:#0033b3;white-space:pre;">private</span><span style="position:absolute;left:711.0px;top:314px;font-family:'Liberation Mono', monospace;font-size:18.33px;line-height:24px;color:#0033b3;white-space:pre;">int</span><span style="position:absolute;left:755.0px;top:314px;font-family:'Liberation Mono', monospace;font-size:18.33px;line-height:24px;color:#808080;white-space:pre;">a</span><span style="position:absolute;left:777.0px;top:314px;font-family:'Liberation Mono', monospace;font-size:18.33px;line-height:24px;color:#000;white-space:pre;">=</span><span style="position:absolute;left:799.0px;top:314px;font-family:'Liberation Mono', monospace;font-size:18.33px;line-height:24px;color:#1750eb;white-space:pre;">1</span><span style="position:absolute;left:810.0px;top:314px;font-family:'Liberation Mono', monospace;font-size:18.33px;line-height:24px;color:#000;white-space:pre;">;</span><span style="position:absolute;left:623.0px;top:342px;font-family:'Liberation Mono', monospace;font-size:18.33px;line-height:24px;color:#0033b3;white-space:pre;">public</span><span style="position:absolute;left:700.0px;top:342px;font-family:'Liberation Mono', monospace;font-size:18.33px;line-height:24px;color:#0033b3;white-space:pre;">static</span><span style="position:absolute;left:777.0px;top:342px;font-family:'Liberation Mono', monospace;font-size:18.33px;line-height:24px;color:#0033b3;white-space:pre;">void</span><span style="position:absolute;left:832.0px;top:342px;font-family:'Liberation Mono', monospace;font-size:18.33px;line-height:24px;color:#00627a;white-space:pre;">main</span><span style="position:absolute;left:876.0px;top:342px;font-family:'Liberation Mono', monospace;font-size:18.33px;line-height:24px;color:#000;white-space:pre;">(String[] args) {</span><span style="position:absolute;left:667.0px;top:370px;font-family:'Liberation Mono', monospace;font-size:18.33px;line-height:24px;color:#0033b3;white-space:pre;">int</span><span style="position:absolute;left:711.0px;top:370px;font-family:'Liberation Mono', monospace;font-size:18.33px;line-height:24px;color:#808080;white-space:pre;">b</span><span style="position:absolute;left:733.0px;top:370px;font-family:'Liberation Mono', monospace;font-size:18.33px;line-height:24px;color:#000;white-space:pre;">=</span><span style="position:absolute;left:755.0px;top:370px;font-family:'Liberation Mono', monospace;font-size:18.33px;line-height:24px;color:#1750eb;white-space:pre;">2</span><span style="position:absolute;left:766.0px;top:370px;font-family:'Liberation Mono', monospace;font-size:18.33px;line-height:24px;color:#000;white-space:pre;">;</span><span style="position:absolute;left:623.0px;top:398px;font-family:'Liberation Mono', monospace;font-size:18.33px;line-height:24px;color:#000;white-space:pre;">}</span><span style="position:absolute;left:579.0px;top:426px;font-family:'Liberation Mono', monospace;font-size:18.33px;line-height:24px;color:#000;white-space:pre;">}</span><svg style="position:absolute;left:722px;top:277px;" width="66" height="4" viewBox="0 0 66 4"><path d="M0 2l2 -2l2 2l2 -2l2 2l2 -2l2 2l2 -2l2 2l2 -2l2 2l2 -2l2 2l2 -2l2 2l2 -2l2 2l2 -2l2 2l2 -2l2 2l2 -2l2 2l2 -2l2 2l2 -2l2 2l2 -2l2 2l2 -2l2 2l2 -2l2 2" fill="none" stroke="#a9d29a" stroke-width="0.8"/></svg><svg style="position:absolute;left:623px;top:305px;" width="358" height="4" viewBox="0 0 358 4"><path d="M0 2l2 -2l2 2l2 -2l2 2l2 -2l2 2l2 -2l2 2l2 -2l2 2l2 -2l2 2l2 -2l2 2l2 -2l2 2l2 -2l2 2l2 -2l2 2l2 -2l2 2l2 -2l2 2l2 -2l2 2l2 -2l2 2l2 -2l2 2l2 -2l2 2l2 -2l2 2l2 -2l2 2l2 -2l2 2l2 -2l2 2l2 -2l2 2l2 -2l2 2l2 -2l2 2l2 -2l2 2l2 -2l2 2l2 -2l2 2l2 -2l2 2l2 -2l2 2l2 -2l2 2l2 -2l2 2l2 -2l2 2l2 -2l2 2l2 -2l2 2l2 -2l2 2l2 -2l2 2l2 -2l2 2l2 -2l2 2l2 -2l2 2l2 -2l2 2l2 -2l2 2l2 -2l2 2l2 -2l2 2l2 -2l2 2l2 -2l2 2l2 -2l2 2l2 -2l2 2l2 -2l2 2l2 -2l2 2l2 -2l2 2l2 -2l2 2l2 -2l2 2l2 -2l2 2l2 -2l2 2l2 -2l2 2l2 -2l2 2l2 -2l2 2l2 -2l2 2l2 -2l2 2l2 -2l2 2l2 -2l2 2l2 -2l2 2l2 -2l2 2l2 -2l2 2l2 -2l2 2l2 -2l2 2l2 -2l2 2l2 -2l2 2l2 -2l2 2l2 -2l2 2l2 -2l2 2l2 -2l2 2l2 -2l2 2l2 -2l2 2l2 -2l2 2l2 -2l2 2l2 -2l2 2l2 -2l2 2l2 -2l2 2l2 -2l2 2l2 -2l2 2l2 -2l2 2l2 -2l2 2l2 -2l2 2l2 -2l2 2l2 -2l2 2l2 -2l2 2l2 -2l2 2l2 -2l2 2l2 -2l2 2" fill="none" stroke="#c4c4c4" stroke-width="0.8"/></svg><div style="position:absolute;left:625px;top:365px;width:1px;height:28px;background:#d4d4d4;"></div><svg style="position:absolute;left:538px;top:260px;" width="11" height="14" viewBox="0 0 11 14"><path d="M0.300 0.200l10 6.800l-10 6.800z" fill="#59a869"/></svg><svg style="position:absolute;left:538px;top:344px;" width="11" height="14" viewBox="0 0 11 14"><path d="M0.300 0.200l10 6.800l-10 6.800z" fill="#59a869"/></svg><svg style="position:absolute;left:537px;top:147px;" width="17" height="15" viewBox="0 0 17 15"><g fill="#b0b8be"><rect x="0" y="0.400" width="2" height="14.400"/><rect x="4.300" y="1.900" width="11.500" height="2"/><rect x="4.300" y="6.300" width="11.500" height="2"/><rect x="4.300" y="10.700" width="7.400" height="2"/></g></svg><svg style="position:absolute;left:565.0px;top:150px;" width="13" height="15" viewBox="0 0 13 15"><path d="M0.500 0.500h12v8.800l-6 5l-6-5z" fill="#fff" stroke="#c6c6c6" stroke-width="1"/><path d="M3.300 6.300h6.400" stroke="#c0c0c0" stroke-width="1"/></svg><svg style="position:absolute;left:565.0px;top:232.5px;" width="13" height="15" viewBox="0 0 13 15"><path d="M0.500 14.300h12v-8.800l-6-5l-6 5z" fill="#fff" stroke="#c6c6c6" stroke-width="1"/><path d="M3.300 8.700h6.400" stroke="#c0c0c0" stroke-width="1"/></svg><svg style="position:absolute;left:565.0px;top:346px;" width="13" height="15" viewBox="0 0 13 15"><path d="M0.500 0.500h12v8.800l-6 5l-6-5z" fill="#fff" stroke="#c6c6c6" stroke-width="1"/><path d="M3.300 6.300h6.400" stroke="#c0c0c0" stroke-width="1"/></svg><svg style="position:absolute;left:565.0px;top:400.5px;" width="13" height="15" viewBox="0 0 13 15"><path d="M0.500 14.300h12v-8.800l-6-5l-6 5z" fill="#fff" stroke="#c6c6c6" stroke-width="1"/><path d="M3.300 8.700h6.400" stroke="#c0c0c0" stroke-width="1"/></svg><svg style="position:absolute;left:34px;top:1003px;" width="13" height="10" viewBox="0 0 13 10"><rect x="0" y="0" width="13" height="10" fill="#fff"/><text x="3" y="10.5" font-family="Liberation Sans" font-weight="bold" font-size="11" fill="#3d9ff0">P</text></svg><span style="position:absolute;left:51.3px;top:1002px;font-family:'Liberation Sans', sans-serif;font-size:12px;line-height:18px;color:#000;white-space:pre;letter-spacing:-0.371px;">Pants Console</span><svg style="position:absolute;left:149px;top:1005px;" width="11" height="8" viewBox="0 0 11 8"><g fill="#6e6e6e"><rect x="0" y="0" width="10.5" height="2"/><rect x="0" y="3.800" width="7" height="2"/><rect x="0" y="7.600" width="10.5" height="2"/></g></svg><span style="position:absolute;left:165.4px;top:1002px;font-family:'Liberation Sans', sans-serif;font-size:12px;line-height:18px;color:#000;white-space:pre;letter-spacing:-0.545px;"><u>0</u>: Messages</span><svg style="position:absolute;left:251px;top:1004px;" width="11" height="9" viewBox="0 0 11 9"><rect x="0" y="0" width="11" height="9" fill="#6e6e6e"/><path d="M2 2.2l2.6 2.2l-2.6 2.2" fill="none" stroke="#f2f2f2" stroke-width="1.1"/></svg><span style="position:absolute;left:267.6px;top:1002px;font-family:'Liberation Sans', sans-serif;font-size:12px;line-height:18px;color:#000;white-space:pre;letter-spacing:-0.194px;">Terminal</span><svg style="position:absolute;left:333px;top:1003px;" width="12" height="10" viewBox="0 0 12 10"><path d="M1.6 1.5v7h4.5" fill="none" stroke="#6e6e6e" stroke-width="1.4"/><path d="M7.4 9.6v-6.6" fill="none" stroke="#6e6e6e" stroke-width="1.4"/><path d="M4.6 4.4l2.8-3.4l2.8 3.4z" fill="#6e6e6e"/></svg><span style="position:absolute;left:349.6px;top:1002px;font-family:'Liberation Sans', sans-serif;font-size:12px;line-height:18px;color:#000;white-space:pre;letter-spacing:-0.461px;"><u>9</u>: Git</span><svg style="position:absolute;left:398px;top:1005px;" width="11" height="8" viewBox="0 0 11 8"><g fill="#6e6e6e"><rect x="0" y="0" width="2" height="2"/><rect x="3.200" y="0" width="7" height="2"/><rect x="0" y="3.800" width="2" height="2"/><rect x="3.200" y="3.800" width="7" height="2"/><rect x="0" y="7.600" width="2" height="2"/><rect x="3.200" y="7.600" width="7" height="2"/></g></svg><span style="position:absolute;left:414px;top:1002px;font-family:'Liberation Sans', sans-serif;font-size:12px;line-height:18px;color:#000;white-space:pre;letter-spacing:-0.899px;"><u>6</u>: TODO</span><svg style="position:absolute;left:1820px;top:1002px;" width="14" height="11" viewBox="0 0 14 11"><circle cx="6.700" cy="7.200" r="5.800" fill="none" stroke="#6e6e6e" stroke-width="1.500"/></svg><span style="position:absolute;left:1837.7px;top:1002px;font-family:'Liberation Sans', sans-serif;font-size:12px;line-height:18px;color:#000;white-space:pre;letter-spacing:-0.431px;">Event Log</span><div style="position:absolute;left:95px;top:28px;width:277px;height:456px;background:#f2f2f2;border:1px solid #cdcdcd;"></div><span style="position:absolute;left:120.2px;top:30px;font-family:'Liberation Sans', sans-serif;font-size:13px;line-height:19px;color:#000;white-space:pre;letter-spacing:0.182px;"><u>T</u>ool Windows</span><svg style="position:absolute;left:360px;top:35.4px;" width="7" height="8" viewBox="0 0 7 8"><path d="M0.2 0.3v7.2l5.8-3.6z" fill="#6e6e6e"/></svg><span style="position:absolute;left:120.2px;top:51px;font-family:'Liberation Sans', sans-serif;font-size:13px;line-height:19px;color:#000;white-space:pre;letter-spacing:-0.014px;">Appearance</span><svg style="position:absolute;left:360px;top:56.4px;" width="7" height="8" viewBox="0 0 7 8"><path d="M0.2 0.3v7.2l5.8-3.6z" fill="#6e6e6e"/></svg><div style="position:absolute;left:96px;top:72px;width:277px;height:1px;background:#d4d4d4;"></div><span style="position:absolute;left:120.2px;top:75px;font-family:'Liberation Sans', sans-serif;font-size:13px;line-height:19px;color:#000;white-space:pre;letter-spacing:0.030px;">Quic<u>k</u> Definition</span><span style="position:absolute;left:294.3px;top:75px;font-family:'Liberation Sans', sans-serif;font-size:13px;line-height:19px;color:#5e5e5e;white-space:pre;letter-spacing:0.115px;">Ctrl+Shift+I</span><span style="position:absolute;left:120.2px;top:96px;font-family:'Liberation Sans', sans-serif;font-size:13px;line-height:19px;color:#000;white-space:pre;letter-spacing:-0.171px;">Show Siblings</span><span style="position:absolute;left:120.2px;top:117px;font-family:'Liberation Sans', sans-serif;font-size:13px;line-height:19px;color:#000;white-space:pre;letter-spacing:0.050px;">Quick Type Definition</span><span style="position:absolute;left:120.2px;top:138px;font-family:'Liberation Sans', sans-serif;font-size:13px;line-height:19px;color:#000;white-space:pre;letter-spacing:0.017px;">Quick <u>D</u>ocumentation</span><span style="position:absolute;left:322.0px;top:138px;font-family:'Liberation Sans', sans-serif;font-size:13px;line-height:19px;color:#5e5e5e;white-space:pre;letter-spacing:0.136px;">Ctrl+Q</span><span style="position:absolute;left:120.2px;top:159px;font-family:'Liberation Sans', sans-serif;font-size:13px;line-height:19px;color:#000;white-space:pre;letter-spacing:-0.114px;">Show Bytecode With Jclasslib</span><span style="position:absolute;left:120.2px;top:180px;font-family:'Liberation Sans', sans-serif;font-size:13px;line-height:19px;color:#000;white-space:pre;letter-spacing:-0.129px;">Show Bytecode</span><span style="position:absolute;left:120.2px;top:201px;font-family:'Liberation Sans', sans-serif;font-size:13px;line-height:19px;color:#000;white-space:pre;letter-spacing:0.046px;"><u>P</u>arameter Info</span><span style="position:absolute;left:324.6px;top:201px;font-family:'Liberation Sans', sans-serif;font-size:13px;line-height:19px;color:#5e5e5e;white-space:pre;letter-spacing:-0.097px;">Ctrl+P</span><span style="position:absolute;left:120.2px;top:222px;font-family:'Liberation Sans', sans-serif;font-size:13px;line-height:19px;color:#000;white-space:pre;letter-spacing:0.125px;">Typ<u>e</u> Info</span><span style="position:absolute;left:290.6px;top:222px;font-family:'Liberation Sans', sans-serif;font-size:13px;line-height:19px;color:#5e5e5e;white-space:pre;letter-spacing:-0.009px;">Ctrl+Shift+P</span><span style="position:absolute;left:120.2px;top:243px;font-family:'Liberation Sans', sans-serif;font-size:13px;line-height:19px;color:#000;white-space:pre;letter-spacing:0.045px;"><u>C</u>ontext Info</span><span style="position:absolute;left:326.6px;top:243px;font-family:'Liberation Sans', sans-serif;font-size:13px;line-height:19px;color:#5e5e5e;white-space:pre;letter-spacing:0.281px;">Alt+Q</span><span style="position:absolute;left:120.2px;top:264px;font-family:'Liberation Sans', sans-serif;font-size:13px;line-height:19px;color:#000;white-space:pre;letter-spacing:-0.012px;">Show Implicit Hints</span><span style="position:absolute;left:265.0px;top:264px;font-family:'Liberation Sans', sans-serif;font-size:13px;line-height:19px;color:#5e5e5e;white-space:pre;letter-spacing:0.255px;">Ctrl+Alt+Shift+=</span><div style="position:absolute;left:96px;top:285px;width:277px;height:1px;background:#d4d4d4;"></div><span style="position:absolute;left:120.2px;top:288px;font-family:'Liberation Sans', sans-serif;font-size:13px;line-height:19px;color:#000;white-space:pre;letter-spacing:-0.433px;">Rece<u>n</u>t Files</span><span style="position:absolute;left:325.20000000000005px;top:288px;font-family:'Liberation Sans', sans-serif;font-size:13px;line-height:19px;color:#5e5e5e;white-space:pre;letter-spacing:-0.217px;">Ctrl+E</span><span style="position:absolute;left:120.2px;top:309px;font-family:'Liberation Sans', sans-serif;font-size:13px;line-height:19px;color:#000;white-space:pre;letter-spacing:-0.259px;">Recently Changed Files</span><span style="position:absolute;left:120.2px;top:330px;font-family:'Liberation Sans', sans-serif;font-size:13px;line-height:19px;color:#000;white-space:pre;letter-spacing:-0.190px;">Recent Locations</span><span style="position:absolute;left:291.20000000000005px;top:330px;font-family:'Liberation Sans', sans-serif;font-size:13px;line-height:19px;color:#5e5e5e;white-space:pre;letter-spacing:-0.063px;">Ctrl+Shift+E</span><span style="position:absolute;left:120.2px;top:351px;font-family:'Liberation Sans', sans-serif;font-size:13px;line-height:19px;color:#000;white-space:pre;letter-spacing:-0.328px;">R<u>e</u>cent Changes</span><span style="position:absolute;left:294.6px;top:351px;font-family:'Liberation Sans', sans-serif;font-size:13px;line-height:19px;color:#5e5e5e;white-space:pre;letter-spacing:0.023px;">Alt+Shift+C</span><div style="position:absolute;left:96px;top:372px;width:277px;height:1px;background:#d4d4d4;"></div><span style="position:absolute;left:120.2px;top:375px;font-family:'Liberation Sans', sans-serif;font-size:13px;line-height:19px;color:#000;white-space:pre;letter-spacing:-0.094px;">Compare With...</span><span style="position:absolute;left:323.0px;top:375px;font-family:'Liberation Sans', sans-serif;font-size:13px;line-height:19px;color:#5e5e5e;white-space:pre;letter-spacing:0.079px;">Ctrl+D</span><span style="position:absolute;left:120.2px;top:396px;font-family:'Liberation Sans', sans-serif;font-size:13px;line-height:19px;color:#000;white-space:pre;letter-spacing:0.149px;">Compare with Clip<u>b</u>oard</span><div style="position:absolute;left:96px;top:417px;width:277px;height:1px;background:#d4d4d4;"></div><span style="position:absolute;left:120.2px;top:420px;font-family:'Liberation Sans', sans-serif;font-size:13px;line-height:19px;color:#000;white-space:pre;letter-spacing:-0.318px;"><u>Q</u>uick Switch Scheme...</span><span style="position:absolute;left:327.6px;top:420px;font-family:'Liberation Sans', sans-serif;font-size:13px;line-height:19px;color:#5e5e5e;white-space:pre;letter-spacing:0.172px;">Ctrl+`</span><span style="position:absolute;left:120.2px;top:441px;font-family:'Liberation Sans', sans-serif;font-size:13px;line-height:19px;color:#000;white-space:pre;letter-spacing:-0.032px;">Active Editor</span><svg style="position:absolute;left:360px;top:446.4px;" width="7" height="8" viewBox="0 0 7 8"><path d="M0.2 0.3v7.2l5.8-3.6z" fill="#6e6e6e"/></svg><div style="position:absolute;left:96px;top:462px;width:277px;height:1px;background:#d4d4d4;"></div><span style="position:absolute;left:120.2px;top:465px;font-family:'Liberation Sans', sans-serif;font-size:13px;line-height:19px;color:#000;white-space:pre;letter-spacing:0.024px;">Bidi Text Base Direction</span><svg style="position:absolute;left:360px;top:470.4px;" width="7" height="8" viewBox="0 0 7 8"><path d="M0.2 0.3v7.2l5.8-3.6z" fill="#6e6e6e"/></svg><div style="position:absolute;left:94px;top:154px;width:254px;height:23px;border:3px solid #ff14eb;"></div><svg style="position:absolute;left:102px;top:162px;" width="10" height="12" viewBox="0 0 10 12"><rect x="0" y="0" width="10" height="12" fill="#b8e2f8"/><g fill="#7fa9c2"><rect x="1.2" y="1.2" width="1" height="1.6"/><rect x="3.4" y="1.2" width="1" height="1.6"/><rect x="5.6" y="1.2" width="1" height="1.6"/><rect x="7.8" y="1.2" width="1" height="1.6"/><rect x="1.6" y="4.2" width="1" height="3.4"/><rect x="3.6" y="4.2" width="1" height="3.4"/><rect x="6" y="4.2" width="2.6" height="3.4"/><rect x="1.2" y="9.2" width="1" height="1.6"/><rect x="3.4" y="9.2" width="1" height="1.6"/><rect x="5.6" y="9.2" width="1" height="1.6"/><rect x="7.8" y="9.2" width="1" height="1.6"/></g></svg><svg style="position:absolute;left:100px;top:183px;" width="15" height="14" viewBox="0 0 15 14"><circle cx="4.4" cy="6.6" r="3.5" fill="none" stroke="#6e6e6e" stroke-width="1.5"/><path d="M6.9 9.2l3.6 3.6" stroke="#6e6e6e" stroke-width="1.7"/><path d="M6 0.2h8v8.6h-3.8v-1.4h2.2v-1h-2.6v-1.2h2.6v-1h-3.4v-1.2h3.4v-1.2h-6.4z" fill="#6e6e6e"/></svg><svg style="position:absolute;left:96px;top:372px;" width="40" height="46" viewBox="0 0 40 46"><g fill="#389fd6"><path d="M9.9 8.9l4.1-3.9v3.1h4.2v1.7h-4.2v3.1z"/><path d="M12.2 15l-4.1-4v3.2h-4.2v1.7h4.2v3.2z"/><path d="M12.2 33l3.7-3.9v3h3.2v1.8h-3.2v3z"/><path d="M14 37l-3.8-4v3.1h-3v1.8h3v3.1z"/></g><path d="M4 27.2h3v-1.2h4.1v1.2h2.9v2.2h-8v9.6h-2z" fill="#6e6e6e"/><rect x="8" y="26.8" width="2" height="0.9" fill="#f2f2f2"/></svg><div style="position:absolute;left:1885px;top:185px;width:14px;height:2px;background:#ebc700;"></div><div style="position:absolute;left:1885px;top:213px;width:14px;height:2px;background:#ebc700;"></div><div style="position:absolute;left:1885px;top:297px;width:14px;height:2px;background:#d6cfa6;"></div><div style="position:absolute;left:1885px;top:325px;width:14px;height:2px;background:#ebc700;"></div><div style="position:absolute;left:1885px;top:381px;width:14px;height:2px;background:#ebc700;"></div>
</body></html>
